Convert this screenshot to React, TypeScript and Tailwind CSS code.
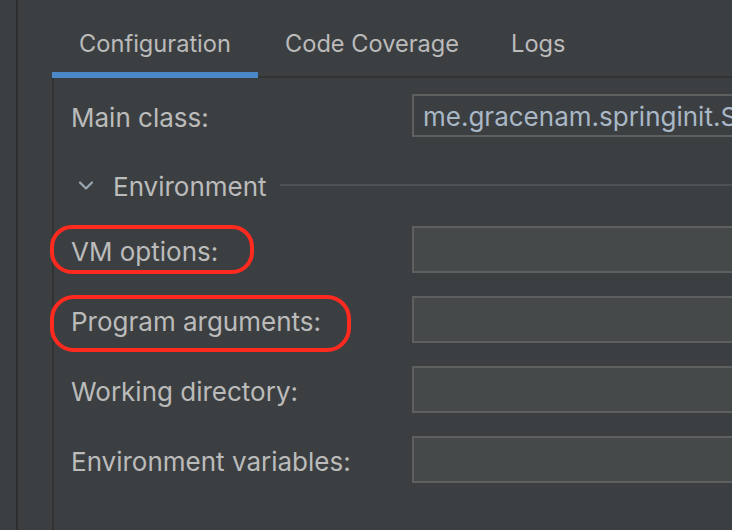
import React from "react";

const font = { fontFamily: "Inter, 'Noto Sans', sans-serif" };

function Field({ h = "h-[47px]", bg = "bg-[#45494a]", children }: { h?: string; bg?: string; children?: React.ReactNode }) {
  return (
    <div className={`w-[360px] shrink-0 ${h} ${bg} border-2 border-[#5e6060] flex items-center pl-[9px] pt-[2px] text-[#a9b7c6] overflow-hidden whitespace-nowrap`}>
      {children}
    </div>
  );
}

function Row({ label, className = "", h, bg, value }: { label: string; className?: string; h?: string; bg?: string; value?: string }) {
  return (
    <div className={`flex items-center ${className}`}>
      <div className="w-[341px] shrink-0 pt-[4px] text-[#bbbbbb]">{label}</div>
      <Field h={h} bg={bg}>{value}</Field>
    </div>
  );
}

export default function App() {
  return (
    <div
      className="relative w-[732px] h-[530px] overflow-hidden bg-[#3c3f41] flex text-[26px] leading-none"
      style={font}
    >
      <div className="w-[18px] shrink-0 border-r-2 border-[#2b2d2f]" />
      <div className="w-[34px] shrink-0" />
      <div className="flex-1 flex flex-col min-w-0">
        <div className="flex h-[78px] shrink-0 border-b-2 border-[#313335] text-[23.6px]">
          <div className="relative flex items-center justify-center w-[206px] pt-[12px] text-[#bbbbbb]">
            Configuration
            <div className="absolute left-0 right-0 bottom-[-2px] h-[6px] bg-[#4a88c7]" />
          </div>
          <div className="flex items-center pl-[27px] pr-[25px] pt-[12px] text-[#bbbbbb]">Code Coverage</div>
          <div className="flex items-center px-[27px] pt-[12px] text-[#bbbbbb]">Logs</div>
        </div>
        <div className="flex-1 border-l-2 border-[#313335] pl-[17px] pt-[16px] flex flex-col">
          <Row label="Main class:" h="h-[43px]" bg="bg-[#3c3f41]" value="me.gracenam.springinit.SpringinitApplication" />
          <div className="flex items-center h-[30px] mt-[33px] pl-[7px]">
            <svg width="16" height="11" viewBox="0 0 16 11" className="shrink-0">
              <path d="M2 2.5 L8 8.5 L14 2.5" fill="none" stroke="#9aa7b3" strokeWidth="2.2" strokeLinecap="round" strokeLinejoin="round" />
            </svg>
            <span className="ml-[19px] pt-[3px] text-[#bbbbbb]">Environment</span>
            <div className="flex-1 h-[2px] bg-[#4e5254] ml-[13px]" />
          </div>
          <Row label="VM options:" className="mt-[26px]" />
          <Row label="Program arguments:" className="mt-[23px]" />
          <Row label="Working directory:" className="mt-[23px]" />
          <Row label="Environment variables:" className="mt-[23px]" />
        </div>
      </div>
      <div className="absolute left-[50px] top-[225px] w-[204px] h-[49px] rounded-[22px] border-[4px] border-[#ff2a1f]" />
      <div className="absolute left-[50px] top-[295px] w-[301px] h-[57px] rounded-[24px] border-[4px] border-[#ff2a1f]" />
    </div>
  );
}
